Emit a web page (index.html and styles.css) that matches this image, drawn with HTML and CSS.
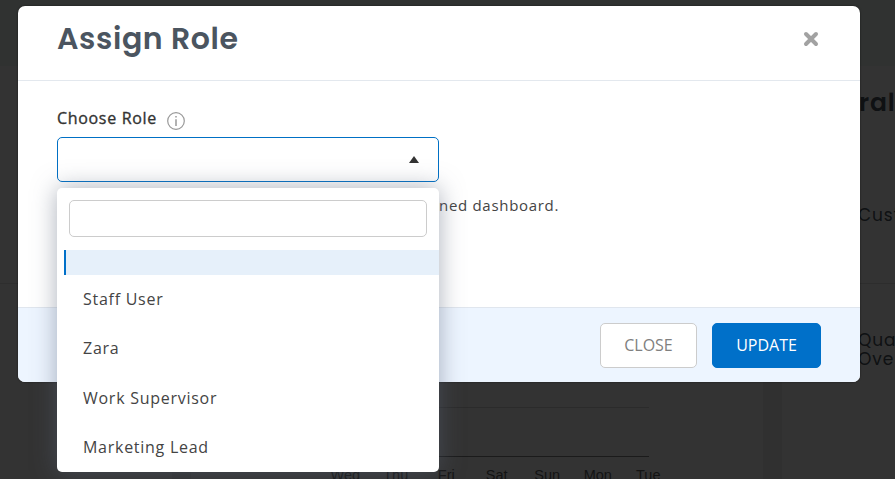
FILE: index.html
```html
<!DOCTYPE html>
<html lang="en">
<head>
    <meta charset="UTF-8">
    <meta name="viewport" content="width=device-width, initial-scale=1.0">
    <title>Assign Role</title>
    <link rel="stylesheet" href="styles.css">
</head>
<body>
    <!-- Dashboard -->
    <div class="page">
        <div class="topbar"></div>
        <div class="board">
            <div class="card side-card"></div>
            <div class="card chart-card">
                <div class="chart">
                    <div class="grid-line"></div>
                    <div class="axis-line"></div>
                </div>
                <div class="days">
                    <span>Wed</span>
                    <span>Thu</span>
                    <span>Fri</span>
                    <span>Sat</span>
                    <span>Sun</span>
                    <span>Mon</span>
                    <span>Tue</span>
                </div>
            </div>
            <div class="card stats-card">
                <div class="stats-title">ral</div>
                <div class="stats-item">Cust</div>
                <div class="stats-item last">Qua<br>Ove</div>
            </div>
        </div>
    </div>

    <div class="overlay">
        <div class="modal">
            <div class="modal-header">
                <h2>Assign Role</h2>
                <button type="button" class="close-icon" aria-label="Close">
                    <svg width="16" height="16" viewBox="0 0 16 16">
                        <path d="M3 3L13 13M13 3L3 13" stroke="#a2a2a2" stroke-width="4" stroke-linecap="round"/>
                    </svg>
                </button>
            </div>

            <div class="modal-body">
                <div class="label-row">
                    <span class="label">Choose Role</span>
                    <svg class="info" width="18" height="18" viewBox="0 0 18 18" fill="none" stroke="#999">
                        <circle cx="9" cy="9" r="8.3" stroke-width="1.2"/>
                        <path d="M9 7.2V14" stroke-width="1.5"/>
                        <path d="M9 4V5.6" stroke-width="1.5"/>
                    </svg>
                </div>
                <div class="select">
                    <div class="select-box">
                        <svg width="10" height="7" viewBox="0 0 10 7"><path d="M5 0L10 7H0Z" fill="#333"/></svg>
                    </div>
                    <div class="dropdown">
                        <input type="text" class="search">
                        <ul class="options">
                            <li class="active"></li>
                            <li>Staff User</li>
                            <li>Zara</li>
                            <li>Work Supervisor</li>
                            <li>Marketing Lead</li>
                        </ul>
                    </div>
                </div>
                <p class="hint">ned dashboard.</p>
            </div>

            <div class="modal-footer">
                <button type="button" class="btn">CLOSE</button>
                <button type="button" class="btn btn-primary">UPDATE</button>
            </div>
        </div>
    </div>
</body>
</html>
```

FILE: styles.css
```css
* {
    box-sizing: border-box;
}

body {
    margin: 0;
    height: 479px;
    overflow: hidden;
    font-family: "Open Sans", sans-serif;
    color: #333;
}

/* Dashboard */
.page {
    height: 479px;
    overflow: hidden;
    background: #f0f0f0;
}

.topbar {
    height: 66px;
    background: #f0faf5;
}

.board {
    display: grid;
    grid-template-columns: 172px 572px 113px;
    column-gap: 19px;
    height: 413px;
}

.card {
    background: #fff;
    overflow: hidden;
}

.side-card::before {
    content: "";
    display: block;
    height: 217px;
    border-bottom: 1px solid #e6e6e6;
}

.chart {
    width: 458px;
    padding-top: 341px;
}

.grid-line {
    height: 49px;
    border-top: 1px solid #d8d8d8;
}

.axis-line {
    border-top: 1px solid #888;
}

.days {
    display: flex;
    margin: 9px 0 0 129px;
    font: 14.5px/18px "Liberation Sans", Arial, sans-serif;
    color: #666;
}

.days span {
    width: 50.5px;
    flex: none;
    text-align: center;
}

.stats-card {
    font-family: Poppins, Inter, sans-serif;
    color: #4a5560;
    padding-left: 77px;
    white-space: nowrap;
}

.stats-title {
    font-size: 25px;
    font-weight: 600;
    line-height: 36px;
    letter-spacing: 0.8px;
    padding: 19px 0 76px;
}

.stats-item {
    margin-left: -77px;
    padding: 8px 0 58px 76px;
    font-size: 17px;
    line-height: 20px;
    letter-spacing: 0.9px;
    border-bottom: 1px solid #e0e0e0;
}

.stats-item.last {
    padding-top: 47px;
    line-height: 19px;
    border-bottom: none;
}

/* Modal */
.overlay {
    position: absolute;
    inset: 0;
    padding: 6px 35px 0 18px;
    background: rgba(0, 0, 0, 0.8);
}

.modal {
    display: flex;
    flex-direction: column;
    height: 376px;
    background: #fff;
    border-radius: 7px;
    box-shadow: 0 0 2px rgba(0, 0, 0, 0.6);
}

.modal-header {
    display: flex;
    justify-content: space-between;
    align-items: center;
    height: 75px;
    padding: 0 41px 9px 39px;
    border-bottom: 1px solid #e3e8ee;
}

h2 {
    margin: 0;
    font-family: Poppins, Inter, sans-serif;
    font-size: 30px;
    font-weight: 600;
    line-height: 40px;
    letter-spacing: 0.6px;
    color: #4b5560;
}

.close-icon {
    display: flex;
    padding: 0;
    border: none;
    background: none;
}

.modal-body {
    flex: 1;
    padding: 26px 39px 0;
}

.label-row {
    display: flex;
    gap: 10px;
    height: 30px;
}

.label {
    font-size: 16px;
    line-height: 22px;
    letter-spacing: 0.68px;
    -webkit-text-stroke: 0.35px #333;
}

.info {
    margin-top: 5px;
}

.select {
    position: relative;
    width: 382px;
}

.select-box {
    display: flex;
    justify-content: flex-end;
    align-items: center;
    height: 45px;
    padding-right: 19px;
    border: 1px solid #0070c5;
    border-radius: 5px;
}

.dropdown {
    position: absolute;
    top: 51px;
    left: 0;
    width: 382px;
    height: 284px;
    padding-top: 12px;
    background: #fff;
    border-radius: 5px;
    box-shadow: 0 0 25px rgba(90, 100, 120, 0.5);
}

.search {
    display: block;
    width: 358px;
    height: 37px;
    margin: 0 auto 13px;
    border: 1px solid #ccc;
    border-radius: 5px;
    background: #fff;
}

.options {
    margin: 0;
    padding: 0 0 0 7px;
    list-style: none;
}

.options li {
    height: 49.3px;
    padding-left: 19px;
    font-size: 16px;
    line-height: 49.4px;
    letter-spacing: 0.73px;
    color: #444;
}

.options .active {
    height: 25px;
    border-left: 2px solid #0070c9;
    background: #e6f0fa;
}

.hint {
    margin: 11px 0 0 382px;
    font-size: 15px;
    line-height: 24px;
    letter-spacing: 0.7px;
    color: #444;
}

.modal-footer {
    display: flex;
    justify-content: flex-end;
    gap: 15px;
    height: 75px;
    padding: 15px 39px 0;
    border-top: 1px solid #e0e6ee;
    border-radius: 0 0 7px 7px;
    background: #edf5ff;
}

.btn {
    width: 97px;
    height: 45px;
    padding: 0 0 2px;
    font-family: inherit;
    font-size: 16px;
    color: #808080;
    background: #fff;
    border: 1px solid #ccc;
    border-radius: 5px;
}

.btn-primary {
    width: 109px;
    color: #fff;
    background: #0070c9;
    border-color: #0070c9;
}
```
